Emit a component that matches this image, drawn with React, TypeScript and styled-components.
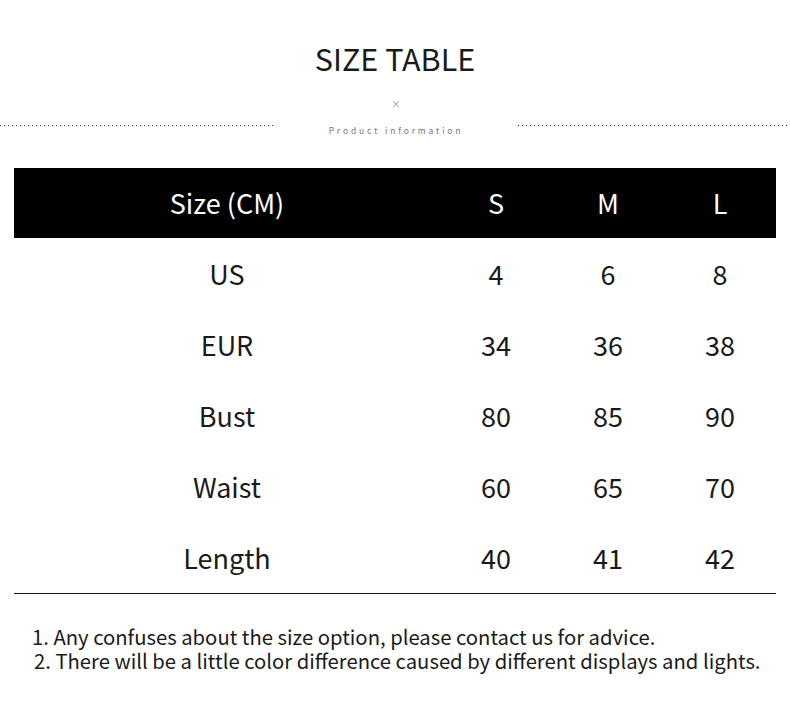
import React from "react";
import styled, { createGlobalStyle } from "styled-components";

const Global = createGlobalStyle`
  html, body { margin: 0; padding: 0; background: #fff; }
  body { font-family: "Noto Sans CJK SC", "Noto Sans", sans-serif; color: #111; }
`;

const Page = styled.div`
  width: 790px;
  height: 719px;
  box-sizing: border-box;
  padding-top: 36px;
  display: flex;
  flex-direction: column;
`;

const Title = styled.h1`
  margin: 0;
  text-align: center;
  font-size: 30.5px;
  font-weight: 400;
  line-height: 44px;
  color: #1a1a1a;
`;

const Divider = styled.div`
  display: grid;
  grid-template-columns: 276px 1fr 274px;
  align-items: start;
  margin-top: 17.5px;
  height: 40px;
`;

const Dots = styled.div<{ $right?: boolean }>`
  height: 1px;
  margin-top: 27px;
  background-image: linear-gradient(to right, #3a3a3a 1px, transparent 1px);
  background-size: 4px 1px;
  background-repeat: repeat-x;
  background-position: ${(p) => (p.$right ? "2px 0" : "0 0")};
`;

const Center = styled.div`
  display: flex;
  flex-direction: column;
  align-items: center;
`;

const Cross = styled.div`
  font-size: 10px;
  line-height: 12px;
  color: #999;
`;

const Sub = styled.div`
  font-size: 8.5px;
  line-height: 12px;
  letter-spacing: 2.85px;
  color: #777;
  margin-top: 14px;
`;

const Table = styled.div`
  margin: 30.5px 14px 0;
  display: flex;
  flex-direction: column;
  border-bottom: 1.5px solid #111;
`;

const Row = styled.div<{ $head?: boolean }>`
  display: grid;
  grid-template-columns: 426px 112px 112px 112px;
  height: ${(p) => (p.$head ? "70px" : "71px")};
  align-items: center;
  background: ${(p) => (p.$head ? "#000" : "transparent")};
  color: ${(p) => (p.$head ? "#fff" : "#1a1a1a")};
`;

const Cell = styled.div`
  text-align: center;
  font-size: 27px;
  line-height: 30px;
`;

const Notes = styled.div`
  margin: 31px 0 0 32px;
  font-size: 20.25px;
  line-height: 24px;
  color: #1a1a1a;
`;

const Note = styled.div<{ $indent?: number }>`
  padding-left: ${(p) => p.$indent ?? 0}px;
`;

const rows: [string, string, string, string][] = [
  ["US", "4", "6", "8"],
  ["EUR", "34", "36", "38"],
  ["Bust", "80", "85", "90"],
  ["Waist", "60", "65", "70"],
  ["Length", "40", "41", "42"],
];

export default function App() {
  return (
    <>
      <Global />
      <Page>
        <Title>SIZE TABLE</Title>
        <Divider>
          <Dots />
          <Center>
            <Cross>×</Cross>
            <Sub>Product information</Sub>
          </Center>
          <Dots $right />
        </Divider>
        <Table>
          <Row $head>
            <Cell>Size (CM)</Cell>
            <Cell>S</Cell>
            <Cell>M</Cell>
            <Cell>L</Cell>
          </Row>
          {rows.map((r) => (
            <Row key={r[0]}>
              {r.map((c, i) => (
                <Cell key={i}>{c}</Cell>
              ))}
            </Row>
          ))}
        </Table>
        <Notes>
          <Note>1. Any confuses about the size option, please contact us for advice.</Note>
          <Note $indent={2}>2. There will be a little color difference caused by different displays and lights.</Note>
        </Notes>
      </Page>
    </>
  );
}
